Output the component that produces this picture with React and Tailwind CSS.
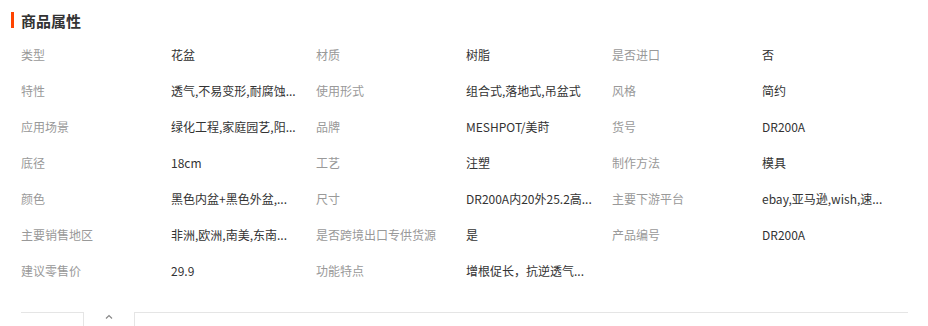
const attrs = [
  ['类型', '花盆'],
  ['材质', '树脂'],
  ['是否进口', '否'],
  ['特性', '透气,不易变形,耐腐蚀...'],
  ['使用形式', '组合式,落地式,吊盆式'],
  ['风格', '简约'],
  ['应用场景', '绿化工程,家庭园艺,阳...'],
  ['品牌', 'MESHPOT/美莳'],
  ['货号', 'DR200A'],
  ['底径', '18cm'],
  ['工艺', '注塑'],
  ['制作方法', '模具'],
  ['颜色', '黑色内盆+黑色外盆,...'],
  ['尺寸', 'DR200A内20外25.2高...'],
  ['主要下游平台', 'ebay,亚马逊,wish,速...'],
  ['主要销售地区', '非洲,欧洲,南美,东南...'],
  ['是否跨境出口专供货源', '是'],
  ['产品编号', 'DR200A'],
  ['建议零售价', '29.9'],
  ['功能特点', '增根促长，抗逆透气...'],
];

const App = () => {
  return (
    <div
      className="w-[928px] h-[326px] bg-white overflow-hidden"
      style={{ fontFamily: '"Noto Sans CJK SC", "Noto Sans", sans-serif' }}
    >
      {/* title */}
      <div className="flex items-center h-[16px] mt-[12px] pl-[11px]">
        <span className="w-[3px] h-[16px] bg-[#ff4400]" />
        <span className="ml-[7px] text-[15px] font-bold text-[#333] leading-none">商品属性</span>
      </div>

      {/* attributes */}
      <div className="grid grid-cols-[295px_296px_295px] ml-[21px] mt-[9px]">
        {attrs.map(([label, value]) => (
          <div key={label} className="flex items-center h-[36px] text-[12px]">
            <span className="w-[150px] shrink-0 text-[#999] whitespace-nowrap">{label}</span>
            <span className="text-[#333] whitespace-nowrap">{value}</span>
          </div>
        ))}
      </div>

      {/* tab bar */}
      <div className="flex ml-[21px] mt-[23px] h-[20px] w-[887px]">
        <div className="w-[63px] border-t border-r border-[#e5e5e5]" />
        <div className="w-[50px] flex justify-center pt-[2px]">
          <svg width="8" height="5" viewBox="0 0 8 5" fill="none" stroke="#888" strokeWidth="1.2">
            <path d="M1 4.5 L4 1.5 L7 4.5" />
          </svg>
        </div>
        <div className="flex-1 border-t border-l border-[#e5e5e5]" />
      </div>
    </div>
  );
};

export default App;
